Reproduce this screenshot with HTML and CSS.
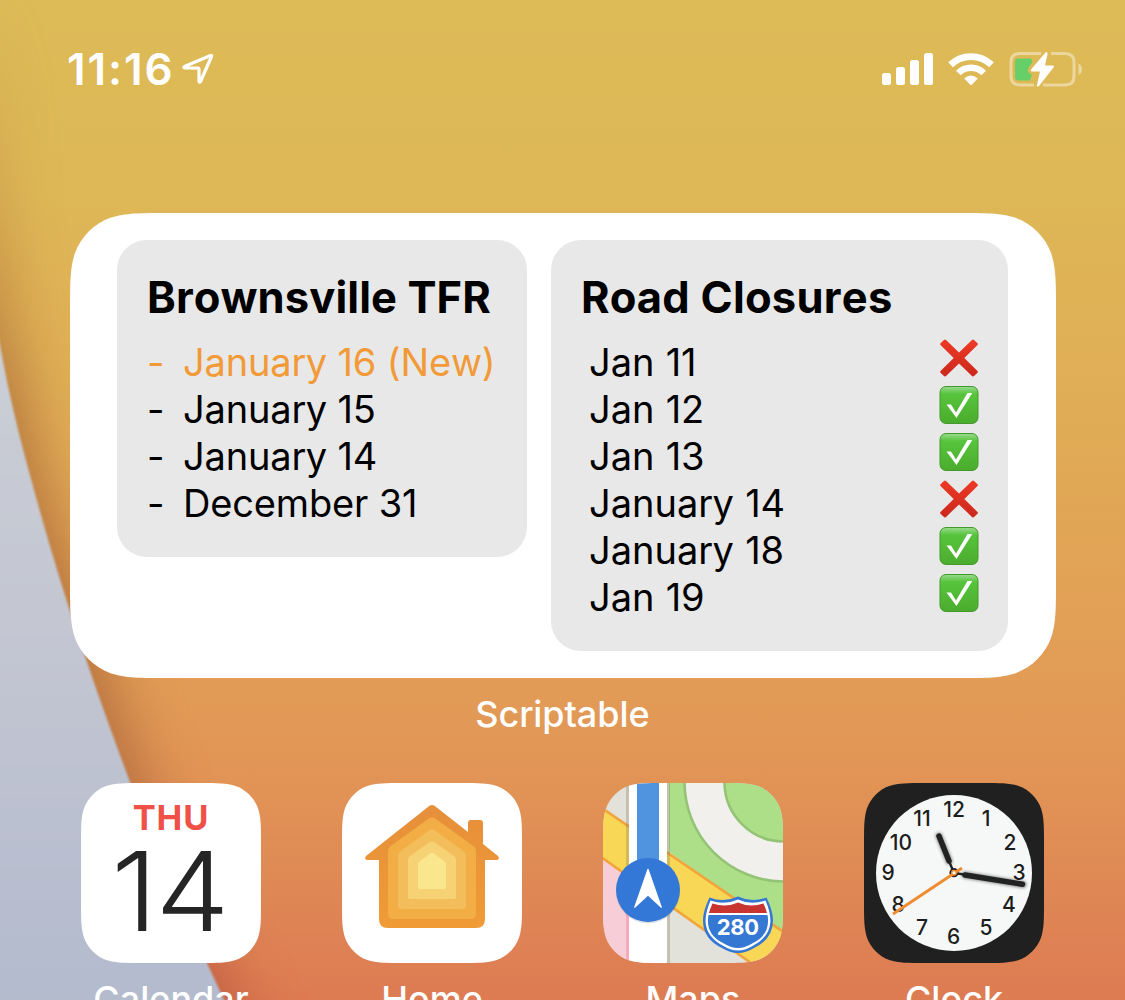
FILE: index.html
```html
<!DOCTYPE html>
<html lang="en">
<head>
<meta charset="utf-8">
<title>Home Screen</title>
<link rel="stylesheet" href="styles.css">
</head>
<body>
<svg class="wallpaper" viewBox="0 0 1125 1000" aria-hidden="true">
  <defs>
    <linearGradient id="sky" x1="0" y1="0" x2="0" y2="1">
      <stop offset="0" stop-color="#ddbb57"/><stop offset=".2" stop-color="#deb756"/><stop offset=".4" stop-color="#e0ad56"/><stop offset=".68" stop-color="#e29c56"/><stop offset=".8" stop-color="#e19256"/><stop offset="1" stop-color="#dd7b53"/>
    </linearGradient>
    <linearGradient id="slope" x1="0" y1="0" x2="0" y2="1">
      <stop offset="0" stop-color="#cdd1d6"/><stop offset=".5" stop-color="#c3c6d2"/><stop offset="1" stop-color="#b1b9cd"/>
    </linearGradient>
    <linearGradient id="shade" gradientUnits="userSpaceOnUse" x1="0" y1="0" x2="0" y2="1000">
      <stop offset="0" stop-color="#b98540" stop-opacity="0"/><stop offset=".18" stop-color="#b98540" stop-opacity=".4"/><stop offset=".4" stop-color="#b0713a" stop-opacity=".9"/><stop offset=".78" stop-color="#ae683a" stop-opacity=".8"/><stop offset="1" stop-color="#b9533c" stop-opacity=".7"/>
    </linearGradient>
    <filter id="far" color-interpolation-filters="sRGB" x="-100%" y="-20%" width="300%" height="140%"><feGaussianBlur stdDeviation="27"/></filter>
    <filter id="near"><feGaussianBlur stdDeviation="1"/></filter>
  </defs>
  <rect width="1125" height="1000" fill="url(#sky)"/>
  <path d="M-60 0H-6C0 170 7 280 16 345C28 430 46 510 92 616C112 680 127 730 147 782C172 845 195 910 222 963L265 1060H-60Z" fill="url(#shade)" filter="url(#far)"/>
  <path d="M-20 250L0 345C9 395 20 440 33 486C45 530 56 567 69 608C88 667 108 723 130 782C155 848 180 905 207 963L245 1045H-20Z" fill="url(#slope)" filter="url(#near)"/>
</svg>

<svg class="symbols" aria-hidden="true">
  <defs>
    <linearGradient id="green" x1="0" y1="0" x2="0" y2="1"><stop offset="0" stop-color="#9bdc90"/><stop offset=".2" stop-color="#57c43d"/><stop offset="1" stop-color="#4bac2d"/></linearGradient>
    <linearGradient id="red" gradientUnits="userSpaceOnUse" x1="0" y1="0" x2="0" y2="38"><stop offset="0" stop-color="#ee3a26"/><stop offset="1" stop-color="#cb271c"/></linearGradient>
  </defs>
  <symbol id="cross" viewBox="0 0 40 38"><path d="M1.500 4.200L5 .9Q6 0 7 1L20 13.600L33 1Q34 0 35 .9L38.500 4.200Q39.300 5 38.500 6L25.300 19L38.500 32Q39.300 33 38.500 33.800L35 37.100Q34 38 33 37L20 24.400L7 37Q6 38 5 37.100L1.500 33.800Q.7 33 1.500 32L14.700 19L1.500 6Q.7 5 1.500 4.200Z" fill="url(#red)"/></symbol>
  <symbol id="check" viewBox="0 0 40 38"><rect x="1" y=".5" width="38" height="37" rx="6" fill="url(#green)" stroke="#43992b"/><path d="M7.500 18.500H12L17 26.500L28.500 7H33.300L17.500 32Z" fill="#fff"/></symbol>
</svg>

<main class="screen">
  <header class="status">
    <div class="status-left">
      <span class="time">11:16</span>
      <svg class="location" viewBox="0 0 32 32"><path d="M2.500 13.500L28.500 2.500Q30 2 29.500 3.500L18.500 28.500Q17.500 30 17 28V16.500Q17 15.200 15.700 15.200L3 15Q1 14.500 2.500 13.500Z" fill="none" stroke="#fff" stroke-width="3.200" stroke-linejoin="round"/></svg>
    </div>
    <div class="status-right">
      <svg class="signal" viewBox="0 0 51 34" fill="#fff"><rect y="21" width="9" height="12" rx="2.500"/><rect x="14" y="15" width="9" height="18" rx="2.500"/><rect x="28" y="8" width="9" height="25" rx="2.500"/><rect x="42" y="1" width="9" height="32" rx="2.500"/></svg>
      <svg class="wifi" viewBox="0 0 46 34" fill="none" stroke="#fff"><path d="M2.500 12.800A29.600 29.600 0 0 1 43.500 12.800" stroke-width="6.800"/><path d="M10.300 21A18 18 0 0 1 35.700 21" stroke-width="6.500"/><path d="M16.200 26.600Q23 20.500 29.800 26.600L23.700 32.700Q23 33.300 22.300 32.700Z" fill="#fff" stroke="none"/></svg>
      <svg class="battery" viewBox="0 0 74 36"><path d="M32 2.500H11Q2 2.500 2 11V25Q2 34 11 34H25M42 2.500H56Q65 2.500 65 11V25Q65 34 56 34H34" fill="none" stroke="#fff" stroke-opacity=".42" stroke-width="3"/><path d="M69.500 12.500Q73 14 73 18.200T69.500 24Z" fill="#fff" fill-opacity=".42"/><path d="M9.500 7.500H20Q23.500 7.500 23.500 11L19.500 17Q18 20.500 20 22L23 23.500L21 29.500H9.500Q6 29.500 6 26V11Q6 7.500 9.500 7.500Z" fill="#67cf67"/><path d="M36.500 1.500Q38.500 0 38.500 3L36 14.500H43.500Q46 14.500 44.500 16.500L30 35Q27.500 37 28 34L31 20.500H23Q21 20 22.500 18Z" fill="#fff"/></svg>
    </div>
  </header>

  <section class="widget">
    <article class="card card-tfr">
      <h2>Brownsville TFR</h2>
      <ul>
        <li class="new"><i>-</i><span>January 16 (New)</span></li>
        <li><i>-</i><span>January 15</span></li>
        <li><i>-</i><span>January 14</span></li>
        <li><i>-</i><span>December 31</span></li>
      </ul>
    </article>
    <article class="card card-roads">
      <h2>Road Closures</h2>
      <ul>
        <li><span>Jan 11</span><svg><use href="#cross"/></svg></li>
        <li><span>Jan 12</span><svg><use href="#check"/></svg></li>
        <li><span>Jan 13</span><svg><use href="#check"/></svg></li>
        <li><span>January 14</span><svg><use href="#cross"/></svg></li>
        <li><span>January 18</span><svg><use href="#check"/></svg></li>
        <li><span>Jan 19</span><svg><use href="#check"/></svg></li>
      </ul>
    </article>
  </section>
  <p class="widget-name">Scriptable</p>

  <nav class="apps">
    <div class="app">
      <div class="icon calendar"><span class="weekday">THU</span><span class="day">14</span></div>
      <span class="name">Calendar</span>
    </div>
    <div class="app">
      <svg class="icon" viewBox="0 0 180 180">
        <defs><linearGradient id="wall" x1="0" y1="0" x2="0" y2="1"><stop offset="0" stop-color="#e68f3b"/><stop offset="1" stop-color="#f09b36"/></linearGradient></defs>
        <rect width="180" height="180" fill="#fff"/>
        <path d="M87.500 22.800Q90 21 92.500 22.800L126 49V40Q126 37 129 37H138Q141 37 141 40V61L156 73Q158.500 77 154 77H143V136Q143 145 134 145H46Q37 145 37 136V77H26Q21.500 77 24 73Z" fill="url(#wall)"/>
        <path d="M88 34.800Q90 33.500 92 34.800L132 63.500Q134 65 134 68V131Q134 136 129 136H51Q46 136 46 131V68Q46 65 48 63.500Z" fill="#f2ae45"/>
        <path d="M88 46.800Q90 45.500 92 46.800L122 68.500Q124 70 124 73V123Q124 126 121 126H59Q56 126 56 123V73Q56 70 58 68.500Z" fill="#f4bd5b"/>
        <path d="M88 58.800Q90 57.500 92 58.800L112 73Q114 74.500 114 77V114Q114 116 112 116H68Q66 116 66 114V77Q66 74.500 68 73Z" fill="#f6d274"/>
        <path d="M88 70.500Q90 69 92 70.500L102.500 78.500Q104 80 104 82V104.500Q104 106 102.500 106H77.500Q76 106 76 104.500V82Q76 80 77.500 78.500Z" fill="#f9e68d"/>
      </svg>
      <span class="name">Home</span>
    </div>
    <div class="app">
      <svg class="icon" viewBox="0 0 180 180">
        <rect width="180" height="180" fill="#e2e1da"/>
        <path d="M0 74L26 92V180H0Z" fill="#f7cdd7"/>
        <path d="M66 0H180V149L66 69Z" fill="#acdf88"/>
        <circle cx="181" cy="-1" r="79.500" fill="none" stroke="#f1f0ec" stroke-width="39"/>
        <circle cx="181" cy="-1" r="99.500" fill="none" stroke="#94c375" stroke-width="2.600"/>
        <circle cx="181" cy="-1" r="59.500" fill="none" stroke="#94c375" stroke-width="2.600"/>
        <path d="M-2 24.500L182 150V204L-2 74Z" fill="#f8d756" stroke="#f1a53d" stroke-width="2.600"/>
        <path d="M23 0H26V180H23ZM64 0H67V180H64Z" fill="#77704e" fill-opacity=".28"/>
        <path d="M23 91H26V180H23Z" fill="#f5a9bd"/>
        <rect x="26" width="38" height="180" fill="#fff"/>
        <rect x="34" width="22" height="100" fill="#5093de"/>
        <circle cx="45" cy="108.500" r="32" fill="#5e6670" fill-opacity=".2"/>
        <circle cx="45" cy="107" r="32" fill="#3478d7"/>
        <path d="M44.300 86.500Q45 84.500 45.700 86.500L58.800 124Q59 125.500 57.700 124.500L45 112.800L32.300 124.500Q31 125.500 31.200 124Z" fill="#fff"/>
        <path d="M106.500 114.500Q121 120 135 113.500Q149 120 163.500 114.500Q170 128 170 137.500Q170 156 151 165Q143 170 135 170T119 165Q100 156 100 137.500Q100 128 106.500 114.500Z" fill="#3478d3"/>
        <path d="M107.500 117.500Q122 122.500 135 116.500Q148 122.500 162.500 117.500Q167.500 129 167.500 138Q167 154 149.500 163Q142 167.500 135 167.500T120.500 163Q103 154 102.500 138Q102.500 129 107.500 117.500Z" fill="#fff"/>
        <path d="M109.500 120.500Q123 125 135 119.500Q147 125 160.500 120.500Q163 126 164 130H106Q107 126 109.500 120.500Z" fill="#c83430"/>
        <path d="M105.500 132H164.500Q168 151 150 160Q142 165 135 165T120 160Q102 151 105.500 132Z" fill="#3478d3"/>
        <text x="134.700" y="152" class="route">280</text>
      </svg>
      <span class="name">Maps</span>
    </div>
    <div class="app">
      <svg class="icon" viewBox="0 0 180 180">
        <defs><filter id="soft" x="-30%" y="-60%" width="160%" height="220%"><feGaussianBlur stdDeviation="1.500"/></filter></defs>
        <rect width="180" height="180" fill="#202020"/>
        <circle cx="90" cy="90" r="78" fill="#f5f8f7"/>
        <g class="numerals">
          <text x="90" y="34">12</text><text x="122" y="43">1</text><text x="146" y="67">2</text><text x="155" y="97">3</text><text x="145" y="129">4</text><text x="122" y="152">5</text><text x="89.500" y="161">6</text><text x="58" y="152">7</text><text x="34" y="129">8</text><text x="24" y="97">9</text><text x="37" y="67">10</text><text x="58" y="43">11</text>
        </g>
        <path d="M75 53L85 78M101 92L159 101.500" stroke="#222" stroke-width="7" stroke-linecap="round" opacity=".5" filter="url(#soft)"/>
        <path d="M75 53L85 78M101 92L158.500 101.300" stroke="#222" stroke-width="5.500" stroke-linecap="round"/>
        <path d="M85 78L90 90L103 92" fill="none" stroke="#222" stroke-width="2.400"/>
        <circle cx="90" cy="89.700" r="4.600" fill="#222"/>
        <path d="M29 131L98 85" stroke="#f08c30" stroke-width="3"/>
        <circle cx="90" cy="89.700" r="2.300" fill="#fff" stroke="#f08c30" stroke-width="1.500"/>
      </svg>
      <span class="name">Clock</span>
    </div>
  </nav>
</main>
</body>
</html>
```
FILE: styles.css
```css
* { box-sizing: border-box; margin: 0; padding: 0; }

body {
  position: relative;
  width: 1125px;
  height: 1000px;
  overflow: hidden;
  font-family: Inter, "Liberation Sans", sans-serif;
  font-kerning: none;
  color: #000;
}

.wallpaper { position: absolute; inset: 0; width: 1125px; height: 1000px; }
.symbols { position: absolute; width: 0; height: 0; }

.screen {
  position: relative;
  height: 1000px;
  overflow: hidden;
  display: flex;
  flex-direction: column;
}

.status {
  flex: none;
  height: 213px;
  padding: 45px 42px 0 67px;
  display: flex;
  justify-content: space-between;
  align-items: flex-start;
  color: #fff;
}
.status-left { display: flex; gap: 9px; }
.time { width: 106px; font-size: 44px; line-height: 49px; font-weight: 600; letter-spacing: 1.900px; white-space: nowrap; }
.location { width: 32px; height: 32px; margin-top: 8px; }
.status-right { display: flex; gap: 15px; padding-top: 7px; }
.signal { width: 51px; height: 34px; }
.wifi { width: 46px; height: 34px; }
.battery { width: 74px; height: 36px; margin-top: -1px; }

.widget {
  flex: none;
  align-self: flex-start;
  margin-left: 70px;
  width: 986px;
  height: 465px;
  padding: 27px 48px 27px 47px;
  display: flex;
  align-items: flex-start;
  gap: 24px;
  background: #fff;
  clip-path: path("M98 0H888C916.300 0 930.400 0 945.600 4.800C962.100 10.800 975.200 23.900 981.200 40.400C986 55.600 986 69.700 986 98V367C986 395.300 986 409.400 981.200 424.600C975.200 441.100 962.100 454.200 945.600 460.200C930.400 465 916.300 465 888 465H98C69.700 465 55.600 465 40.400 460.200C23.900 454.200 10.800 441.100 4.800 424.600C0 409.400 0 395.300 0 367V98C0 69.700 0 55.600 4.800 40.400C10.800 23.900 23.900 10.800 40.400 4.800C55.600 0 69.700 0 98 0Z");
}
.card { border-radius: 30px; background: #e8e8e8; padding: 30px; white-space: nowrap; }
.card-tfr { width: 410px; height: 317px; }
.card-roads { width: 457px; height: 411px; }
.card h2 { height: 69px; font-size: 43.500px; line-height: 55px; font-weight: 700; letter-spacing: .1px; }
.card-roads h2 { letter-spacing: .25px; }
.card ul { list-style: none; }
.card li { height: 47px; display: flex; font-size: 38px; line-height: 47px; font-weight: 400; letter-spacing: -.15px; }
.card li i { width: 36px; font-style: normal; }
.card li.new { color: #f19a37; }
.card-roads li { justify-content: space-between; padding-left: 8px; letter-spacing: 0; word-spacing: .5px; }
.card-roads li svg { width: 40px; height: 38px; margin-right: -.5px; }

.widget-name { flex: none; height: 105px; padding-top: 13px; text-align: center; font-size: 36px; line-height: 46px; font-weight: 500; color: #fff; }

.apps { display: grid; grid-template-columns: repeat(4, 180px); gap: 81px; padding-left: 81px; }
.app { display: flex; flex-direction: column; align-items: center; gap: 13px; }
.icon {
  flex: none;
  width: 180px;
  height: 180px;
  clip-path: path("M61 0H119C136.500 0 145.300 0 154.700 3C165.100 6.800 173.200 14.900 177 25.300C180 34.700 180 43.500 180 61V119C180 136.500 180 145.300 177 154.700C173.200 165.100 165.100 173.200 154.700 177C145.300 180 136.500 180 119 180H61C43.500 180 34.700 180 25.300 177C14.900 173.200 6.800 165.100 3 154.700C0 145.300 0 136.500 0 119V61C0 43.500 0 34.700 3 25.300C6.800 14.900 14.900 6.800 25.300 3C34.700 0 43.500 0 61 0Z");
}
.name { font-size: 36px; line-height: 46px; font-weight: 500; color: #fff; }

.calendar { display: flex; flex-direction: column; align-items: center; background: #fff; padding-top: 14px; }
.weekday { font-size: 34.500px; line-height: 42px; font-weight: 700; letter-spacing: .8px; color: #ef5148; }
.day { margin-right: 4px; font-size: 110px; line-height: 104px; font-weight: 300; color: #252525; letter-spacing: -2px; transform: scaleX(1.07); }

.route { font-size: 22px; font-weight: 700; fill: #fff; text-anchor: middle; letter-spacing: -.4px; }
.numerals { font-size: 21px; font-weight: 500; fill: #1d1d1d; text-anchor: middle; }
```
